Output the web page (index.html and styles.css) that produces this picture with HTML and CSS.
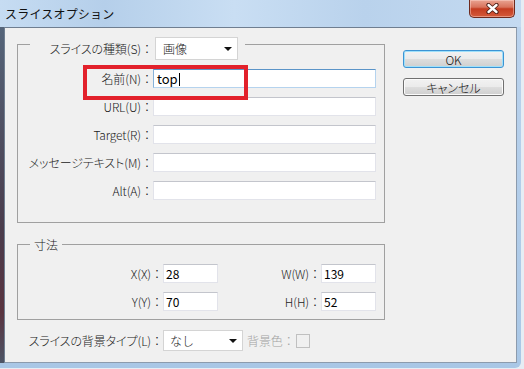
FILE: index.html
```html
<!DOCTYPE html>
<html lang="ja">
<head>
  <meta charset="UTF-8">
  <title>スライスオプション</title>
  <link rel="stylesheet" href="styles.css">
</head>
<body>
  <div class="window">
    <div class="titlebar">
      <span class="title">スライスオプション</span>
      <div class="close">
        <svg width="13" height="11" viewBox="0 0 13 11">
          <path d="M2.5 2 L10.5 9 M10.5 2 L2.5 9" stroke="#4a1d16" stroke-width="4.2" stroke-linecap="round"/>
          <path d="M2.5 2 L10.5 9 M10.5 2 L2.5 9" stroke="#ffffff" stroke-width="2.4" stroke-linecap="round"/>
        </svg>
      </div>
    </div>

    <div class="frame">
      <div class="frame-left"></div>
      <div class="client">
        <div class="main">
          <div class="group group-slice">
            <div class="legend-row">
              <span class="label legend-label">スライスの種類(S)<span class="colon">：</span></span>
              <div class="select select-type"><span>画像</span><i class="arrow"></i></div>
            </div>
            <div class="rows">
              <span class="label">名前(N)<span class="colon">：</span></span>
              <div class="field focused">top<span class="caret"></span></div>
              <span class="label">URL(U)<span class="colon">：</span></span>
              <div class="field"></div>
              <span class="label">Target(R)<span class="colon">：</span></span>
              <div class="field"></div>
              <span class="label">メッセージテキスト(M)<span class="colon">：</span></span>
              <div class="field"></div>
              <span class="label">Alt(A)<span class="colon">：</span></span>
              <div class="field"></div>
            </div>
          </div>

          <div class="group group-size">
            <div class="legend">寸法</div>
            <div class="size-grid">
              <span class="label">X(X)<span class="colon">：</span></span>
              <div class="field">28</div>
              <span class="label">W(W)<span class="colon">：</span></span>
              <div class="field">139</div>
              <span class="label">Y(Y)<span class="colon">：</span></span>
              <div class="field">70</div>
              <span class="label">H(H)<span class="colon">：</span></span>
              <div class="field">52</div>
            </div>
          </div>

          <div class="bg-row">
            <span class="label bg-label">スライスの背景タイプ(L)<span class="colon">：</span></span>
            <div class="select select-bg"><span>なし</span><i class="arrow"></i></div>
            <span class="label disabled">背景色<span class="colon">：</span></span>
            <div class="swatch"></div>
          </div>
        </div>

        <div class="buttons">
          <button class="btn btn-default">OK</button>
          <button class="btn">キャンセル</button>
        </div>
      </div>
    </div>

    <div class="highlight"></div>
  </div>
</body>
</html>
```

FILE: styles.css
```css
* {
  box-sizing: border-box;
  margin: 0;
  padding: 0;
}

body {
  width: 524px;
  height: 369px;
  overflow: hidden;
  background: #e6edf4;
  font-family: "Noto Sans CJK JP", sans-serif;
  font-size: 12px;
  color: #1a1a1a;
}

.window {
  position: relative;
  width: 521px;
  height: 368px;
  display: flex;
  flex-direction: column;
  padding-bottom: 5px;
  background: linear-gradient(180deg, #bcd4ee, #a9c7e6);
  border-bottom-right-radius: 6px;
}

.titlebar {
  height: 27px;
  display: flex;
  align-items: center;
  justify-content: space-between;
  padding-left: 5px;
  background: linear-gradient(90deg, #c6dcf2 0%, #b5cfea 20%, #c9def3 45%, #b9d2ec 70%, #c4daf1 100%);
}

.title {
  font-size: 12px;
  letter-spacing: 0.2px;
  color: #111;
}

.close {
  align-self: flex-start;
  width: 46px;
  height: 18px;
  margin-right: 6px;
  display: flex;
  align-items: center;
  justify-content: center;
  border: 1px solid #6e2a1e;
  border-top: none;
  border-radius: 0 0 5px 5px;
  background: linear-gradient(180deg, #e9a391 0%, #d8735c 42%, #c43c20 52%, #d45a3a 100%);
  box-shadow: inset 0 0 0 1px rgba(255, 220, 210, 0.45);
}

.frame {
  flex: 1;
  display: flex;
}

.frame-left {
  width: 4px;
  background: linear-gradient(180deg, #55657a, #4a3c4c 60%, #5a3440 85%, #4d5566);
}

.client {
  width: 513px;
  display: flex;
  padding-left: 12px;
  background: #f0f0f0;
  border: 1px solid #6f7e90;
  border-right-color: #8c9bad;
  border-bottom-color: #8c9bad;
}

.main {
  width: 368px;
  padding-top: 16px;
}

.group {
  border: 1px solid #a0a0a0;
}

.label {
  text-align: right;
  white-space: nowrap;
  font-weight: 300;
  font-feature-settings: "palt";
  letter-spacing: -0.1px;
  line-height: 19px;
  color: #222;
}

.colon {
  font-feature-settings: normal;
  letter-spacing: 0;
}

.legend-row {
  display: flex;
  align-items: center;
  width: 215px;
  height: 23px;
  margin: -8px 0 0 12px;
  background: #f0f0f0;
}

.legend-label {
  width: 123px;
}

.select {
  display: flex;
  align-items: center;
  justify-content: space-between;
  background: #fff;
  border: 1px solid #d4d4d4;
  padding: 0 5px 0 7px;
  font-weight: 300;
}

.select-type {
  width: 83px;
  height: 23px;
  margin-left: 2px;
}

.select-bg {
  width: 80px;
  height: 21px;
  padding-left: 6px;
}

.arrow {
  width: 0;
  height: 0;
  border-left: 4px solid transparent;
  border-right: 4px solid transparent;
  border-top: 4px solid #111;
}

.rows {
  display: grid;
  grid-template-columns: 135px 223px;
  grid-auto-rows: 19px;
  row-gap: 9px;
  margin-top: 9px;
  padding-bottom: 22px;
}

.field {
  height: 19px;
  line-height: 17px;
  padding-left: 2px;
  background: #fff;
  border: 1px solid #e2e3ea;
  border-top-color: #c3c5cc;
  font-size: 12px;
  color: #000;
}

.field.focused {
  padding-left: 3px;
  font-size: 13px;
  border-color: #b5d3ee;
  border-top-color: #5b94c8;
  border-left-color: #86b2da;
}

.caret {
  display: inline-block;
  width: 1px;
  height: 13px;
  margin-left: 1px;
  vertical-align: -2px;
  background: #000;
}

.group-size {
  margin-top: 21px;
}

.legend {
  width: fit-content;
  height: 16px;
  line-height: 16px;
  margin: -8px 0 0 12px;
  padding: 0 4px;
  font-weight: 300;
  color: #222;
  background: #f0f0f0;
}

.size-grid {
  display: grid;
  grid-template-columns: 145px 55px 103px 55px;
  grid-auto-rows: 19px;
  row-gap: 9px;
  margin-top: 11px;
  padding-bottom: 8px;
}

.bg-row {
  display: flex;
  align-items: center;
  height: 21px;
  margin-top: 10px;
}

.bg-label {
  width: 146px;
}

.disabled {
  color: #a3a3a3;
  margin-left: 4px;
}

.swatch {
  width: 14px;
  height: 14px;
  margin-left: 1px;
  border: 1px solid #c0c0c0;
}

.buttons {
  width: 101px;
  margin-left: 18px;
  padding-top: 22px;
  display: flex;
  flex-direction: column;
  gap: 10px;
}

.btn {
  height: 18px;
  font-family: "Noto Sans CJK JP", sans-serif;
  font-size: 12px;
  font-weight: 300;
  font-feature-settings: "palt";
  color: #111;
  border: 1px solid #707070;
  border-radius: 3px;
  background: linear-gradient(180deg, #f2f2f2 0%, #ebebeb 48%, #dddddd 52%, #cfcfcf 100%);
  box-shadow: inset 0 0 0 1px #fbfbfb;
}

.btn-default {
  border-color: #3c94d4;
  box-shadow: inset 0 0 0 1px #9fe0fa;
}

.highlight {
  position: absolute;
  left: 83px;
  top: 65px;
  width: 165px;
  height: 35px;
  border: 4px solid #e2212b;
}
```
